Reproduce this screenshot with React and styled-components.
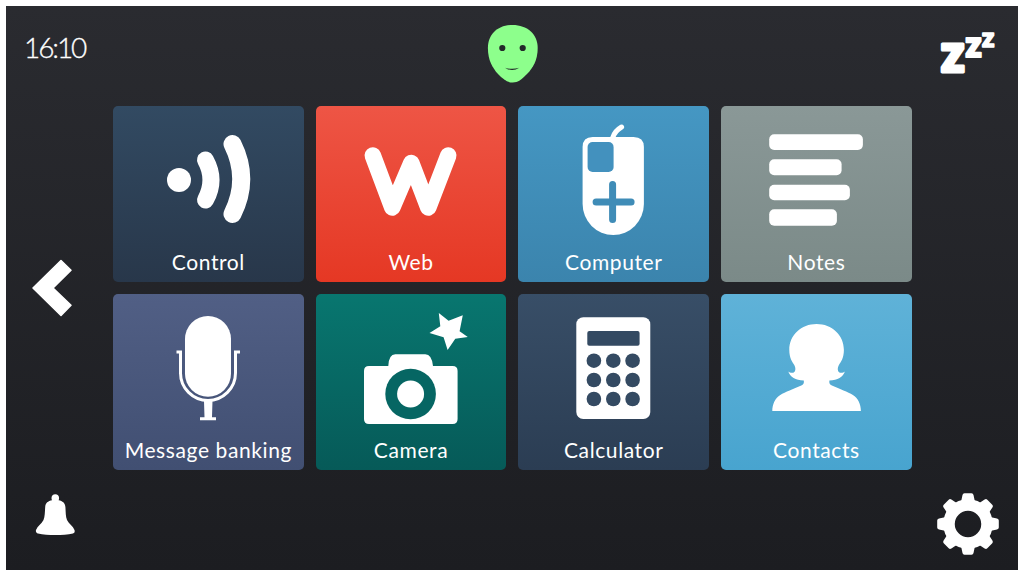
import React from 'react'
import styled, { createGlobalStyle } from 'styled-components'

const Global = createGlobalStyle`
  html, body { margin: 0; padding: 0; background: #fff; }
  #root { padding: 6px; width: 1024px; height: 576px; box-sizing: border-box; }
`

const Screen = styled.div`
  display: grid;
  grid-template-columns: 107px 799px 106px;
  grid-template-rows: 100px 364px 100px;
  width: 1012px;
  height: 564px;
  background: linear-gradient(#2a2b30, #1c1d21);
  color: #fff;
  font-family: Lato, "Liberation Sans", sans-serif;
`

const Clock = styled.div`
  padding: 25px 0 0 18px;
  font-size: 28px;
  font-weight: 300;
  line-height: 32px;
  letter-spacing: -2.1px;
  -webkit-text-stroke: 0.3px #fff;
`

const Face = styled.svg`
  display: block;
  justify-self: center;
  margin-top: 19px;
`

const Snooze = styled.svg`
  display: block;
  margin: 18px 0 0 24px;
  font-family: "Open Sans", sans-serif;
  font-weight: 800;
  fill: #fff;
  stroke: #fff;
  stroke-linejoin: round;
`

const SideIcon = styled.svg`
  display: block;
  margin: ${(p) => p.$margin};
  align-self: ${(p) => p.$align || 'start'};
`

const Tiles = styled.div`
  display: grid;
  grid-template-columns: repeat(4, 190.7px);
  grid-template-rows: repeat(2, 176px);
  gap: 12px;
`

const Tile = styled.div`
  display: flex;
  flex-direction: column;
  border-radius: 5px;
  background: linear-gradient(${(p) => p.$top}, ${(p) => p.$bottom});
  overflow: hidden;
`

const Art = styled.svg`
  display: block;
  width: 100%;
  height: 143px;
  flex: none;
`

const Label = styled.div`
  text-align: center;
  font-size: 21px;
  line-height: 26px;
  font-weight: 400;
  letter-spacing: 0.6px;
`

const tiles = [
  {
    name: 'Control', top: '#324a62', bottom: '#28374a', box: '113 106 190.700 143',
    art: (
      <g fill="none" stroke="#fff" strokeLinecap="round">
        <circle cx="179" cy="180" r="12" fill="#fff" stroke="none" />
        <path d="M205.500 160Q216.500 180 205.500 200" strokeWidth="17" />
        <path d="M232.500 144Q250 179 232.500 214" strokeWidth="18" />
      </g>
    ),
  },
  {
    name: 'Web', top: '#ee5545', bottom: '#e53824', box: '315.700 106 190.700 143',
    art: (
      <polyline points="372.500,155.500 392,207.500 411,163 428,207.500 448,155.500" fill="none" stroke="#fff" strokeWidth="16.500" strokeLinecap="round" strokeLinejoin="round" />
    ),
  },
  {
    name: 'Computer', top: '#4597c3', bottom: '#3b84ad', box: '518.400 106 190.700 143',
    art: (
      <g>
        <path d="M613 138Q615 131 622 127" fill="none" stroke="#fff" strokeWidth="5" strokeLinecap="round" />
        <path d="M593 137H634Q644.300 137 644.300 147V204A30.650 31 0 0 1 583 204V147Q583 137 593 137Z" fill="#fff" />
        <rect x="588" y="142" width="26" height="30" rx="5" fill="#4391be" />
        <path d="M596.500 202H631.500M613 184.500V219.500" stroke="#3f8cb7" strokeWidth="7" strokeLinecap="round" />
      </g>
    ),
  },
  {
    name: 'Notes', top: '#8a9897', bottom: '#7b8a88', box: '721.100 106 190.700 143',
    art: (
      <g fill="#fff">
        <rect x="769.300" y="134.300" width="93.700" height="15.700" rx="5" />
        <rect x="769.300" y="159.300" width="72.400" height="16" rx="5" />
        <rect x="769.300" y="184.700" width="80.700" height="15.600" rx="5" />
        <rect x="769.300" y="209.300" width="67.700" height="16.400" rx="5" />
      </g>
    ),
  },
  {
    name: 'Message banking', top: '#515f85', bottom: '#414f72', box: '113 294 190.700 143',
    art: (
      <g>
        <rect x="185" y="316" width="46" height="80.700" rx="23" fill="#fff" />
        <path d="M176.500 352H180.500V373A27.500 27.500 0 0 0 235.500 373V352H240" fill="none" stroke="#fff" strokeWidth="3" />
        <path d="M204 401H212.500L212 417.300H216V420.300H200V417.300H204.500Z" fill="#fff" />
      </g>
    ),
  },
  {
    name: 'Camera', top: '#08766f', bottom: '#065a58', box: '315.700 294 190.700 143',
    art: (
      <g>
        <polygon points="438.500,313 448.300,320.700 462.500,315.200 459.300,331.300 467.500,337 455,338.700 447.300,350 443.300,337.300 429.200,333 440,326.300" fill="#fff" />
        <path d="M388 366Q388.500 354.300 395 354.300H425Q431.500 354.300 432.700 366H452.300Q457.300 366 457.300 371V419Q457.300 424 452.300 424H368.700Q363.700 424 363.700 419V371Q363.700 366 368.700 366Z" fill="#fff" />
        <circle cx="410.300" cy="394" r="25.300" fill="#066663" />
        <circle cx="410.300" cy="394" r="13.500" fill="#fff" />
      </g>
    ),
  },
  {
    name: 'Calculator', top: '#384e67', bottom: '#2b3d53', box: '518.400 294 190.700 143',
    art: (
      <g fill="#344a62">
        <rect x="576.700" y="317.300" width="74" height="101.700" rx="7" fill="#fff" />
        <rect x="587.700" y="331" width="52.300" height="14.700" rx="2" />
        {[360.700, 380, 399].map((y) =>
          [594.300, 613.700, 633].map((x) => <circle key={x + '-' + y} cx={x} cy={y} r="7.300" />)
        )}
      </g>
    ),
  },
  {
    name: 'Contacts', top: '#5fb2d8', bottom: '#48a4cf', box: '721.100 294 190.700 143',
    art: (
      <path
        d="M816.700 324C832 324 844 335 844 350C844 358 841 362 839 365C837 369 838 372 840 372.700C842 373 844 372.500 845 371.500C843 377 838 380 829.500 380.500C829 383 830 385 832 385.500C840 389 848 392 853 395C858 398 861 404 861 411H772.400C772.400 404 775.400 398 780.400 395C785.400 392 793.400 389 801.400 385.500C803.400 385 804.400 383 803.900 380.500C795.400 380 790.400 377 788.400 371.500C789.400 372.500 791.400 373 793.400 372.700C795.400 372 796.400 369 794.400 365C792.400 362 789.400 358 789.400 350C789.400 335 801.400 324 816.700 324Z"
        fill="#fff"
      />
    ),
  },
]

const teeth = [0, 45, 90, 135, 180, 225, 270, 315]

const App = () => {
  return (
    <>
      <Global />
      <Screen>
        <Clock>16:10</Clock>
        <Face width="51" height="58" viewBox="487 25 51 58">
          <path d="M512.700 25C527 25 537.700 34 537.700 48C537.700 60 533 68 527 74C522 79 518 82.500 512.700 82.500C507 82.500 503 79 498 74C492.500 68 487.900 60 487.900 48C487.900 34 498 25 512.700 25Z" fill="#8dff8c" />
          <circle cx="502.300" cy="48" r="3.100" fill="#23282a" />
          <circle cx="522.700" cy="48" r="3.100" fill="#23282a" />
          <path d="M505 67.700Q512.200 70 519.300 67.700Q512.200 72.500 505 67.700Z" fill="#23282a" />
        </Face>
        <Snooze width="64" height="62" viewBox="936 24 64 62">
          <text x="941" y="71.500" fontSize="38" strokeWidth="3">Z</text>
          <text x="965.500" y="56.500" fontSize="26" strokeWidth="2">Z</text>
          <text x="982" y="47" fontSize="20" strokeWidth="1.500">Z</text>
        </Snooze>

        <SideIcon $align="center" $margin="0 0 0 25px" width="41" height="58" viewBox="30 259.500 41 58">
          <path d="M60 261L70 270.700L52 288.500L70 305.700L60 316L32 288.500Z" fill="#fff" stroke="#fff" strokeWidth="1.500" strokeLinejoin="round" />
        </SideIcon>
        <Tiles>
          {tiles.map((t) => (
            <Tile key={t.name} $top={t.top} $bottom={t.bottom}>
              <Art viewBox={t.box}>{t.art}</Art>
              <Label>{t.name}</Label>
            </Tile>
          ))}
        </Tiles>
        <div />

        <SideIcon $margin="24px 0 0 29px" width="41" height="42" viewBox="35 494 41 42">
          <path d="M55.300 494.300C53 494.300 51.500 496 51.500 498C51.500 499 51.700 499.700 52 500.300C48 501 45.500 503 45.200 507C44.800 512 45 516 43.500 520C41.500 524 37.500 526 36 530C35.500 532 36.500 533 38 533.500C43 534.700 49 535 55.300 535C61.500 535 68 534.700 73 533.500C74.500 533 75 532 74.500 530C73 526 69 524 67 520C65.500 516 65.800 512 65.400 507C65 503 62.600 501 58.600 500.300C58.900 499.700 59.100 499 59.100 498C59.100 496 57.600 494.300 55.300 494.300Z" fill="#fff" />
        </SideIcon>
        <div />
        <SideIcon $margin="23px 0 0 25px" width="62" height="62" viewBox="-31 -31 62 62">
          <circle r="19" fill="none" stroke="#fff" strokeWidth="11.500" />
          {teeth.map((a) => (
            <path key={a} d="M-7 -22L-5.500 -29Q-5.200 -30.800 -3.500 -30.800H3.500Q5.200 -30.800 5.500 -29L7 -22Z" fill="#fff" transform={`rotate(${a})`} />
          ))}
        </SideIcon>
      </Screen>
    </>
  )
}

export default App
